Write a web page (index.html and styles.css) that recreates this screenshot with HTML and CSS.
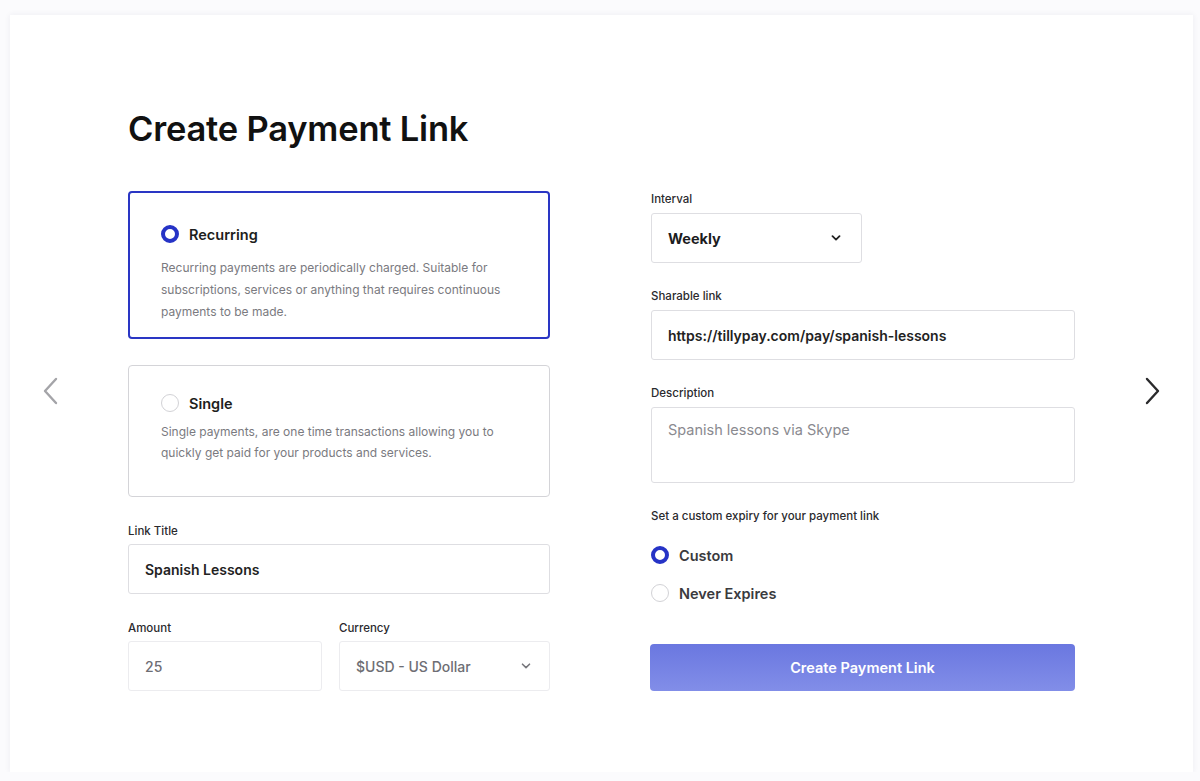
FILE: index.html
```html
<!DOCTYPE html>
<html lang="en">
<head>
    <meta charset="UTF-8">
    <meta name="viewport" content="width=device-width, initial-scale=1.0">
    <title>Create Payment Link</title>
    <link rel="stylesheet" href="styles.css">
</head>
<body>
    <div class="frame">
        <div class="nav">
            <svg class="arrow arrow-prev" width="16" height="28" viewBox="0 0 16 28"><path d="M14 2 L3 14 L14 26" fill="none" stroke="currentColor" stroke-width="2.4" stroke-linecap="round" stroke-linejoin="round"/></svg>
        </div>

        <div class="main">
            <h1>Create Payment Link</h1>
            <div class="columns">
                <div class="col left">
                    <div class="type-card selected">
                        <div class="radio-row">
                            <span class="radio on"></span>
                            <span class="radio-label">Recurring</span>
                        </div>
                        <p class="type-desc">Recurring payments are periodically charged. Suitable for subscriptions, services or anything that requires continuous payments to be made.</p>
                    </div>
                    <div class="type-card single">
                        <div class="radio-row">
                            <span class="radio"></span>
                            <span class="radio-label">Single</span>
                        </div>
                        <p class="type-desc">Single payments, are one time transactions allowing you to quickly get paid for your products and services.</p>
                    </div>
                    <div class="field">
                        <label>Link Title</label>
                        <div class="input strong">Spanish Lessons</div>
                    </div>
                    <div class="field-row">
                        <div class="field amount">
                            <label>Amount</label>
                            <div class="input muted">25</div>
                        </div>
                        <div class="field currency">
                            <label>Currency</label>
                            <div class="input select muted">$USD - US Dollar
                                <svg class="caret" width="10" height="6" viewBox="0 0 10 6"><path d="M1.5 1.2 L5 4.6 L8.5 1.2" fill="none" stroke="currentColor" stroke-width="1.6" stroke-linecap="round" stroke-linejoin="round"/></svg>
                            </div>
                        </div>
                    </div>
                </div>

                <div class="col right">
                    <div class="field interval">
                        <label>Interval</label>
                        <div class="input select bold">Weekly
                            <svg class="caret dark" width="10" height="6" viewBox="0 0 10 6"><path d="M1.5 1.2 L5 4.6 L8.5 1.2" fill="none" stroke="currentColor" stroke-width="1.8" stroke-linecap="round" stroke-linejoin="round"/></svg>
                        </div>
                    </div>
                    <div class="field">
                        <label>Sharable link</label>
                        <div class="input strong">https://tillypay.com/pay/spanish-lessons</div>
                    </div>
                    <div class="field">
                        <label>Description</label>
                        <div class="input textarea">Spanish lessons via Skype</div>
                    </div>
                    <div class="expiry">
                        <p class="expiry-title">Set a custom expiry for your payment link</p>
                        <div class="radio-row expiry-opt">
                            <span class="radio on"></span>
                            <span class="radio-label">Custom</span>
                        </div>
                        <div class="radio-row expiry-opt">
                            <span class="radio"></span>
                            <span class="radio-label">Never Expires</span>
                        </div>
                    </div>
                    <button class="submit">Create Payment Link</button>
                </div>
            </div>
        </div>

        <div class="nav">
            <svg class="arrow arrow-next" width="16" height="28" viewBox="0 0 16 28"><path d="M2 2 L13 14 L2 26" fill="none" stroke="currentColor" stroke-width="2.4" stroke-linecap="round" stroke-linejoin="round"/></svg>
        </div>
    </div>
</body>
</html>
```

FILE: styles.css
```css
* {
    box-sizing: border-box;
}
body {
    margin: 0;
    font-family: Inter, "Noto Sans", sans-serif;
    background-color: #fbfbfd;
    color: #1c1c1e;
}
.frame {
    margin: 15px 7px 0 10px;
    height: 757px;
    background-color: #fff;
    box-shadow: 0 0 6px rgba(40, 40, 80, 0.07);
    display: grid;
    grid-template-columns: 80px 1fr 81px;
}
.nav {
    display: flex;
    align-items: center;
    justify-content: center;
    padding-bottom: 5px;
}
.arrow-prev {
    color: #a4a4a8;
}
.arrow-next {
    color: #2a2a2c;
}
.main {
    padding: 94px 37px 0 38px;
}
h1 {
    margin: 0;
    font-size: 34.5px;
    line-height: 40px;
    font-weight: 600;
    letter-spacing: -0.2px;
    color: #111;
}
.columns {
    margin-top: 42px;
    display: grid;
    grid-template-columns: 422px 424px;
    column-gap: 101px;
    align-items: start;
}
.col {
    display: flex;
    flex-direction: column;
    gap: 26px;
}
.col.right {
    gap: 25px;
}

/* payment type cards */
.type-card {
    border: 1px solid #d4d4d8;
    border-radius: 4px;
    padding: 26px 30px 33px 32px;
}
.type-card.selected {
    border: 2px solid #2a36c4;
    padding: 30px 30px 14px 31px;
}
.radio-row {
    display: flex;
    align-items: center;
    gap: 10px;
    height: 22px;
}
.radio {
    width: 18px;
    height: 18px;
    border-radius: 50%;
    border: 1px solid #d2d2d6;
    flex-shrink: 0;
}
.radio.on {
    border: 4.5px solid #2633c6;
}
.radio-label {
    font-size: 14.5px;
    font-weight: 600;
    color: #1e1e20;
}
.type-desc {
    margin: 12px 0 0;
    font-size: 12px;
    line-height: 22px;
    color: #7a7a80;
    max-width: 345px;
}
.type-card.single .type-desc {
    margin-top: 7px;
    line-height: 21px;
}

/* form fields */
.field {
    display: flex;
    flex-direction: column;
    gap: 6px;
}
.col.left .field {
    gap: 5px;
}
.field label {
    font-size: 11.5px;
    line-height: 16px;
    font-weight: 500;
    color: #2a2a2e;
}
.field-row {
    display: grid;
    grid-template-columns: 194px 211px;
    column-gap: 17px;
}
.input {
    height: 50px;
    border: 1px solid #dedee2;
    border-radius: 3px;
    padding: 0 16px;
    display: flex;
    align-items: center;
    font-size: 14px;
    color: #222;
    background-color: #fff;
}
.input.strong {
    font-weight: 600;
}
.input.muted {
    font-weight: 500;
    color: #6e6e74;
    border-color: #ececef;
}
.input.bold {
    font-weight: 700;
    font-size: 14.5px;
    color: #1c1c1e;
}
.select {
    justify-content: space-between;
}
.caret {
    color: #77777c;
    margin-right: 2px;
}
.caret.dark {
    color: #222;
    margin-right: 4px;
}
.interval .input {
    width: 211px;
}
.textarea {
    height: 76px;
    align-items: flex-start;
    padding-top: 13px;
    font-size: 14.5px;
    color: #8a8a90;
}

/* expiry */
.expiry-title {
    margin: 0 0 20px;
    font-size: 11.5px;
    line-height: 16px;
    font-weight: 500;
    color: #2a2a2e;
}
.expiry-opt {
    height: 22px;
    margin-bottom: 16px;
}
.expiry-opt .radio-label {
    font-size: 14.5px;
    font-weight: 600;
    color: #3a3a3e;
}
.expiry {
    margin-bottom: -1px;
}
.submit {
    height: 47px;
    margin-left: -1px;
    border: none;
    border-radius: 4px;
    background: linear-gradient(#6a77e0, #828ee8);
    color: #fff;
    font-family: inherit;
    font-size: 14.5px;
    font-weight: 600;
}
```
